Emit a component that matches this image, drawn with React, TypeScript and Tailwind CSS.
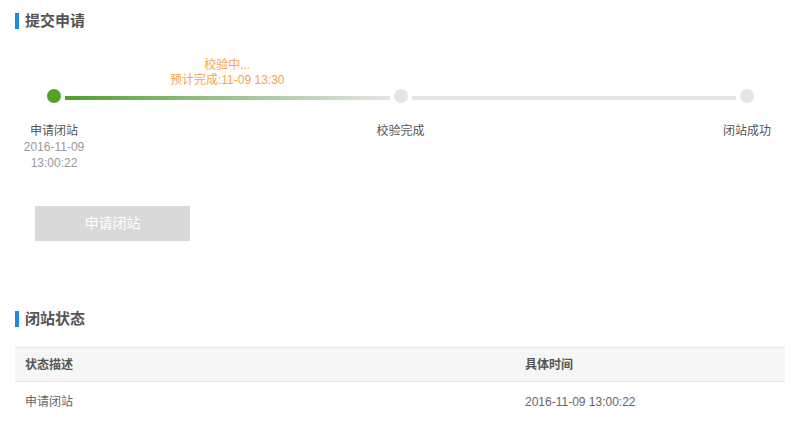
export default function App() {
  return (
    <div
      className="min-h-screen w-full bg-white px-[15px] pt-[13px] text-[12px] text-[#555]"
      style={{ fontFamily: '"Liberation Sans", "Noto Sans CJK SC", sans-serif' }}
    >
      {/* Section: submit */}
      <div className="flex items-center">
        <div className="h-[16px] w-[4px] bg-[#1e88e5]" />
        <span className="ml-[6px] text-[15px] font-bold leading-[16px] text-[#555]">提交申请</span>
      </div>

      {/* Steps */}
      <div className="mt-[29px] flex items-end pl-[32px] pr-[31px]">
        <div className="h-[14px] w-[14px] shrink-0 rounded-full bg-[#52a22a]" />
        <div className="mx-[4px] flex flex-1 flex-col items-center">
          <div className="text-center leading-[15px] text-[#f8a24e]">
            <div>校验中...</div>
            <div>预计完成:11-09 13:30</div>
          </div>
          <div className="mb-[3px] mt-[8px] h-[4px] w-full bg-linear-to-r from-[#4e9f27] to-[#e5e5e5]" />
        </div>
        <div className="h-[14px] w-[14px] shrink-0 rounded-full bg-[#e5e5e5]" />
        <div className="mx-[4px] flex-1">
          <div className="mb-[3px] h-[4px] w-full bg-[#e5e5e5]" />
        </div>
        <div className="h-[14px] w-[14px] shrink-0 rounded-full bg-[#e5e5e5]" />
      </div>

      <div className="-mr-[1px] mt-[20px] flex justify-between leading-[16px]">
        <div className="w-[78px] text-center">
          <div className="text-[#555]">申请闭站</div>
          <div className="text-[#999]">2016-11-09</div>
          <div className="text-[#999]">13:00:22</div>
        </div>
        <div className="w-[78px] text-center text-[#555]">校验完成</div>
        <div className="w-[78px] text-center text-[#555]">闭站成功</div>
      </div>

      <button className="ml-[20px] mt-[35px] flex h-[35px] w-[155px] items-center justify-center bg-[#d9d9d9] text-[14px] text-white">
        申请闭站
      </button>

      {/* Section: status */}
      <div className="mt-[70px] flex items-center">
        <div className="h-[16px] w-[4px] bg-[#1e88e5]" />
        <span className="ml-[6px] text-[15px] font-semibold leading-[16px] text-[#555]">闭站状态</span>
      </div>

      <div className="mt-[20px] border-t border-[#e6e6e6]">
        <div className="flex h-[34px] items-center border-b border-[#e6e6e6] bg-[#f6f6f6] font-bold text-[#555]">
          <div className="w-[500px] pl-[10px]">状态描述</div>
          <div className="flex-1 pl-[10px]">具体时间</div>
        </div>
        <div className="flex h-[40px] items-center text-[#666]">
          <div className="w-[500px] pl-[10px]">申请闭站</div>
          <div className="flex-1 pl-[10px]">2016-11-09 13:00:22</div>
        </div>
      </div>
    </div>
  );
}
